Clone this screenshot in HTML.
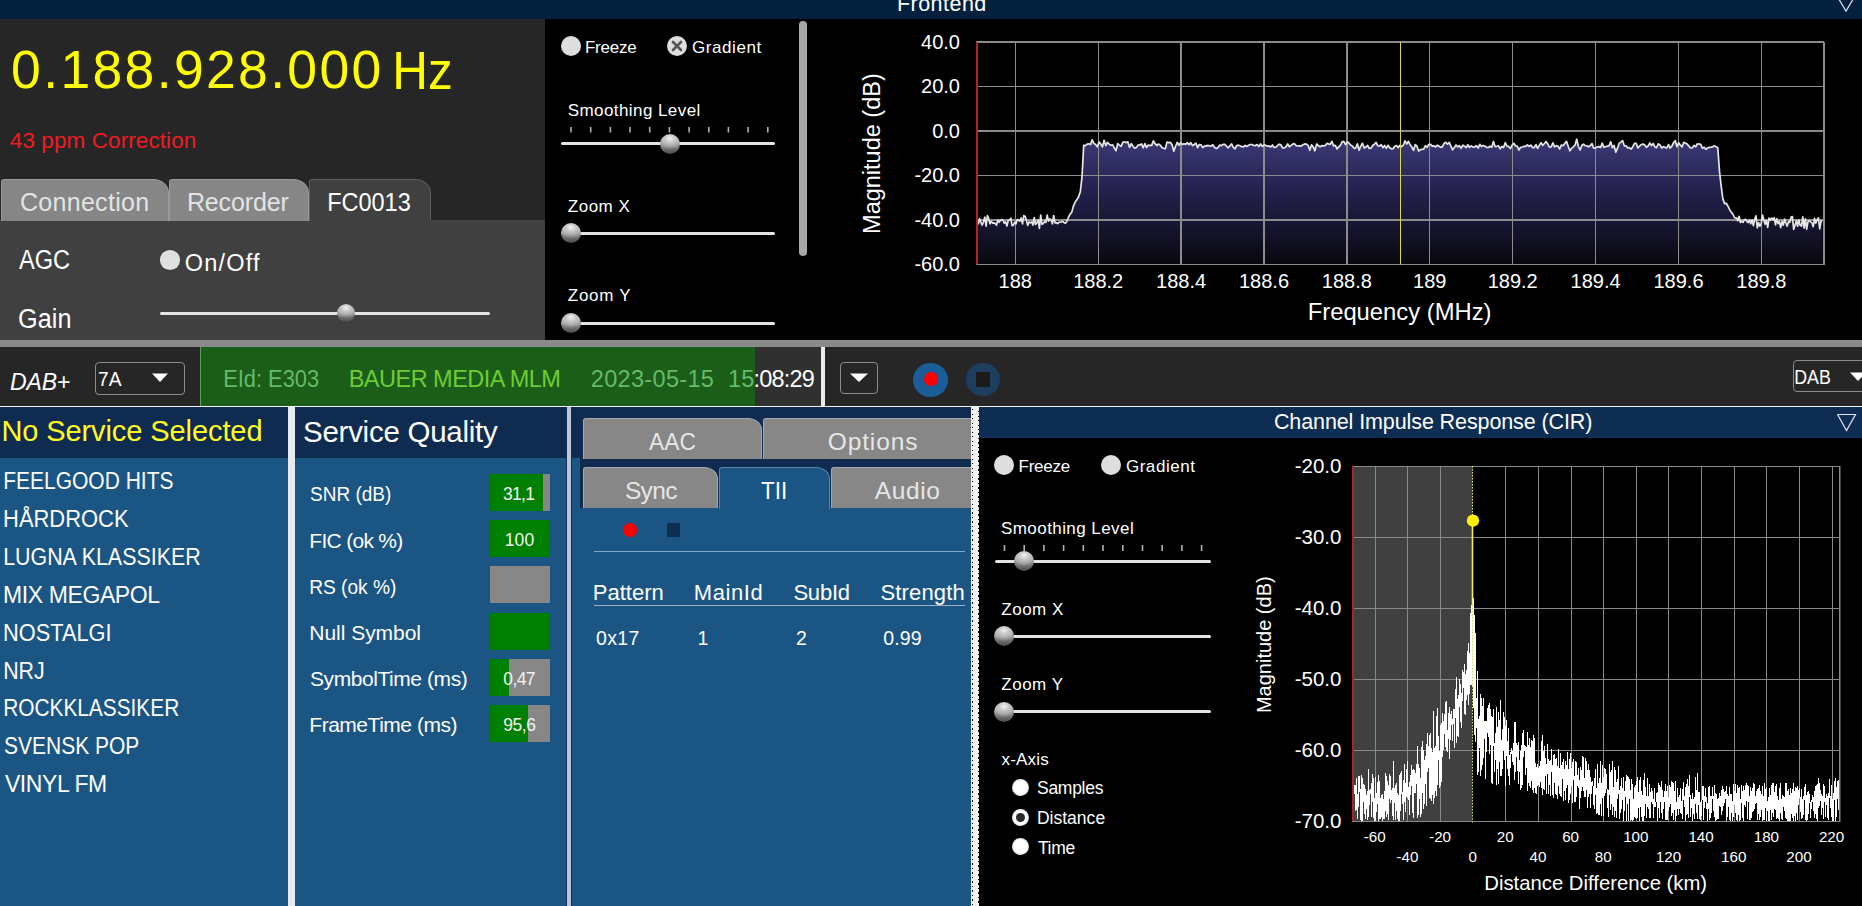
<!DOCTYPE html>
<html><head><meta charset="utf-8"><title>Frontend</title>
<style>
html,body{margin:0;padding:0;}
body{width:1862px;height:906px;overflow:hidden;position:relative;background:#262626;font-family:"Liberation Sans", sans-serif;}
</style></head><body>
<div style="position:absolute;left:0px;top:0px;width:1862px;height:19px;background:#03213f;"></div>
<div style="position:absolute;left:896.9px;top:-5.7px;font-size:21.5px;line-height:21.5px;color:#fff;white-space:pre;letter-spacing:0.48px;">Frontend</div>
<svg style="position:absolute;left:1830px;top:0px" width="32" height="19"><polyline points="7,-4 16,11 25,-4" fill="none" stroke="#dfe6ee" stroke-width="1.2"/></svg>
<div style="position:absolute;left:0px;top:19px;width:545px;height:321px;background:#262626;"></div>
<div style="position:absolute;left:11.1px;top:43.3px;font-size:53.5px;line-height:53.5px;color:#ffff00;white-space:pre;letter-spacing:2.34px;">0.188.928.000</div>
<div style="position:absolute;left:391.6px;top:43.4px;font-size:54px;line-height:54px;color:#ffff00;white-space:pre;transform:scaleX(0.916);transform-origin:4.4px 0;">Hz</div>
<div style="position:absolute;left:9.8px;top:130.0px;font-size:22.5px;line-height:22.5px;color:#ee1c22;white-space:pre;letter-spacing:0.09px;">43 ppm Correction</div>
<div style="position:absolute;left:0px;top:220px;width:545px;height:120px;background:#404040;"></div>
<div style="position:absolute;left:1px;top:179px;width:166px;height:41px;background:#868686;border:1px solid #9b9b9b;border-bottom:none;border-top-left-radius:3px;border-top-right-radius:16px 14px;"></div>
<div style="position:absolute;left:169px;top:179px;width:138px;height:41px;background:#868686;border:1px solid #9b9b9b;border-bottom:none;border-top-left-radius:3px;border-top-right-radius:16px 14px;"></div>
<div style="position:absolute;left:309px;top:179px;width:120px;height:41px;background:#404040;border:1px solid #5e5e5e;border-bottom:none;border-top-left-radius:3px;border-top-right-radius:16px 14px;"></div>
<div style="position:absolute;left:19.9px;top:190.4px;font-size:25px;line-height:25px;color:#e3e3e3;white-space:pre;letter-spacing:0.31px;">Connection</div>
<div style="position:absolute;left:186.9px;top:190.4px;font-size:25px;line-height:25px;color:#e3e3e3;white-space:pre;letter-spacing:-0.14px;">Recorder</div>
<div style="position:absolute;left:326.5px;top:190.1px;font-size:25px;line-height:25px;color:#ffffff;white-space:pre;transform:scaleX(0.940);transform-origin:2.1px 0;">FC0013</div>
<div style="position:absolute;left:19.4px;top:246.7px;font-size:27px;line-height:27px;color:#fff;white-space:pre;transform:scaleX(0.874);transform-origin:0.1px 0;">AGC</div>
<div style="position:absolute;left:18.1px;top:305.7px;font-size:27px;line-height:27px;color:#fff;white-space:pre;transform:scaleX(0.935);transform-origin:1.4px 0;">Gain</div>
<div style="position:absolute;left:160px;top:250px;width:20px;height:19.5px;border-radius:50%;background:#e0e0e0"></div>
<div style="position:absolute;left:184.7px;top:251.6px;font-size:23.5px;line-height:23.5px;color:#fff;white-space:pre;letter-spacing:1.22px;">On/Off</div>
<div style="position:absolute;left:160px;top:311.8px;width:330px;height:3px;border-radius:2px;background:#e4e4e4"></div>
<div style="position:absolute;left:336.8px;top:304.3px;width:18px;height:18px;border-radius:50%;background:radial-gradient(ellipse 70% 55% at 50% 22%, #f2f2f2 0%, #c4c4c4 40%, rgba(150,150,150,0) 100%), linear-gradient(#d8d8d8, #8c8c8c 55%, #4a4a4a)"></div>
<div style="position:absolute;left:545px;top:19px;width:1317px;height:321px;background:#000;"></div>
<div style="position:absolute;left:561px;top:36px;width:20px;height:20px;border-radius:50%;background:#dedede"></div>
<div style="position:absolute;left:585.0px;top:38.8px;font-size:17px;line-height:17px;color:#fff;white-space:pre;letter-spacing:-0.26px;">Freeze</div>
<div style="position:absolute;left:667px;top:36px;width:20px;height:20px;border-radius:50%;background:#dedede"></div>
<svg style="position:absolute;left:667px;top:36px" width="20" height="20"><path d="M6,6 L14,14 M14,6 L6,14" stroke="#555" stroke-width="2.6" stroke-linecap="round"/></svg>
<div style="position:absolute;left:692.1px;top:38.8px;font-size:17px;line-height:17px;color:#fff;white-space:pre;letter-spacing:0.55px;">Gradient</div>
<div style="position:absolute;left:567.7px;top:101.5px;font-size:17px;line-height:17px;color:#fff;white-space:pre;letter-spacing:0.43px;">Smoothing Level</div>
<svg style="position:absolute;left:545px;top:127.4px" width="240" height="6"><rect x="25.2" y="0" width="1.6" height="5.5" fill="#b0b0b0"/><rect x="44.9" y="0" width="1.6" height="5.5" fill="#b0b0b0"/><rect x="64.6" y="0" width="1.6" height="5.5" fill="#b0b0b0"/><rect x="84.2" y="0" width="1.6" height="5.5" fill="#b0b0b0"/><rect x="103.9" y="0" width="1.6" height="5.5" fill="#b0b0b0"/><rect x="123.6" y="0" width="1.6" height="5.5" fill="#b0b0b0"/><rect x="143.3" y="0" width="1.6" height="5.5" fill="#b0b0b0"/><rect x="163.0" y="0" width="1.6" height="5.5" fill="#b0b0b0"/><rect x="182.6" y="0" width="1.6" height="5.5" fill="#b0b0b0"/><rect x="202.3" y="0" width="1.6" height="5.5" fill="#b0b0b0"/><rect x="222.0" y="0" width="1.6" height="5.5" fill="#b0b0b0"/></svg>
<div style="position:absolute;left:561px;top:142.1px;width:214px;height:3px;border-radius:2px;background:#e4e4e4"></div>
<div style="position:absolute;left:659.7px;top:133.6px;width:20px;height:20px;border-radius:50%;background:radial-gradient(ellipse 70% 55% at 50% 22%, #f2f2f2 0%, #c4c4c4 40%, rgba(150,150,150,0) 100%), linear-gradient(#d8d8d8, #8c8c8c 55%, #4a4a4a)"></div>
<div style="position:absolute;left:567.8px;top:197.9px;font-size:17px;line-height:17px;color:#fff;white-space:pre;letter-spacing:0.51px;">Zoom X</div>
<div style="position:absolute;left:561px;top:231.8px;width:214px;height:3px;border-radius:2px;background:#e4e4e4"></div>
<div style="position:absolute;left:561.4px;top:223.3px;width:20px;height:20px;border-radius:50%;background:radial-gradient(ellipse 70% 55% at 50% 22%, #f2f2f2 0%, #c4c4c4 40%, rgba(150,150,150,0) 100%), linear-gradient(#d8d8d8, #8c8c8c 55%, #4a4a4a)"></div>
<div style="position:absolute;left:567.8px;top:287.1px;font-size:17px;line-height:17px;color:#fff;white-space:pre;letter-spacing:0.71px;">Zoom Y</div>
<div style="position:absolute;left:561px;top:321.8px;width:214px;height:3px;border-radius:2px;background:#e4e4e4"></div>
<div style="position:absolute;left:561.4px;top:313.3px;width:20px;height:20px;border-radius:50%;background:radial-gradient(ellipse 70% 55% at 50% 22%, #f2f2f2 0%, #c4c4c4 40%, rgba(150,150,150,0) 100%), linear-gradient(#d8d8d8, #8c8c8c 55%, #4a4a4a)"></div>
<div style="position:absolute;left:799px;top:21px;width:7.5px;height:235px;border-radius:4px;background:#a8a8a8"></div>
<svg style="position:absolute;left:0;top:0" width="1862" height="340" font-family='"Liberation Sans", sans-serif'><defs><linearGradient id="fg" x1="0" y1="0" x2="0" y2="1" gradientUnits="objectBoundingBox"><stop offset="0" stop-color="#3c3976"/><stop offset="0.45" stop-color="#221f4a"/><stop offset="1" stop-color="#08080f"/></linearGradient></defs><polygon points="977,264.5 977.0,221.2 978.3,223.8 979.6,218.7 980.9,222.4 982.2,225.0 983.5,221.8 984.8,217.0 986.1,226.1 987.4,215.7 988.7,218.7 990.0,223.9 991.3,221.3 992.6,223.1 993.9,222.8 995.2,223.4 996.5,225.2 997.8,220.0 999.1,222.3 1000.4,220.6 1001.7,219.6 1003.0,220.3 1004.3,223.2 1005.6,221.8 1006.9,226.0 1008.2,220.5 1009.5,220.0 1010.8,218.2 1012.1,225.6 1013.4,225.2 1014.7,222.1 1016.0,223.8 1017.3,219.6 1018.6,219.8 1019.9,221.1 1021.2,217.9 1022.5,223.9 1023.8,215.7 1025.1,216.3 1026.4,220.4 1027.7,225.4 1029.0,221.8 1030.3,222.8 1031.6,221.8 1032.9,225.0 1034.2,217.5 1035.5,224.5 1036.8,222.8 1038.1,219.9 1039.4,228.3 1040.7,215.1 1042.0,224.3 1043.3,223.5 1044.6,221.5 1045.9,222.4 1047.2,215.1 1048.5,221.1 1049.8,218.9 1051.1,219.9 1052.4,223.8 1053.7,215.5 1055.0,222.8 1056.3,222.6 1057.6,223.7 1058.9,222.3 1060.2,222.0 1061.5,222.0 1062.8,221.5 1064.1,222.7 1065.4,223.2 1066.7,221.7 1068.4,217.5 1070.1,214.2 1071.8,212.1 1073.5,205.8 1075.2,202.1 1076.9,199.6 1078.6,196.8 1080.3,191.7 1082.0,176.8 1083.7,145.4 1085.4,145.6 1087.1,144.1 1088.8,143.8 1090.5,144.6 1092.2,139.8 1093.9,143.3 1095.6,144.6 1097.3,146.8 1099.0,142.1 1100.7,143.9 1102.4,146.9 1104.1,140.2 1105.8,145.6 1107.5,142.3 1109.2,144.3 1110.9,145.3 1112.6,144.9 1114.3,147.9 1116.0,150.7 1117.7,143.7 1119.4,145.1 1121.1,146.4 1122.8,142.4 1124.5,141.8 1126.2,142.6 1127.9,141.9 1129.6,147.4 1131.3,143.6 1133.0,146.3 1134.7,148.3 1136.4,147.4 1138.1,145.1 1139.8,144.9 1141.5,143.9 1143.2,147.8 1144.9,143.6 1146.6,147.6 1148.3,145.1 1150.0,145.3 1151.7,145.4 1153.4,140.8 1155.1,143.7 1156.8,145.5 1158.5,144.0 1160.2,145.1 1161.9,147.6 1163.6,148.3 1165.3,148.7 1167.0,142.1 1168.7,142.6 1170.4,142.4 1172.1,144.7 1173.8,151.2 1175.5,146.5 1177.2,142.3 1178.9,145.2 1180.6,142.8 1182.3,144.5 1184.0,143.7 1185.7,144.4 1187.4,142.6 1189.1,144.7 1190.8,142.6 1192.5,145.7 1194.2,144.5 1195.9,143.1 1197.6,147.6 1199.3,144.5 1201.0,144.9 1202.7,147.6 1204.4,146.2 1206.1,146.1 1207.8,145.4 1209.5,146.0 1211.2,146.2 1212.9,144.7 1214.6,147.6 1216.3,148.6 1218.0,147.6 1219.7,145.0 1221.4,145.7 1223.1,144.3 1224.8,144.4 1226.5,146.2 1228.2,147.8 1229.9,145.9 1231.6,144.0 1233.3,147.4 1235.0,148.9 1236.7,145.5 1238.4,145.2 1240.1,145.8 1241.8,146.7 1243.5,146.9 1245.2,145.4 1246.9,146.4 1248.6,145.2 1250.3,144.5 1252.0,144.5 1253.7,145.5 1255.4,145.6 1257.1,144.6 1258.8,146.5 1260.5,143.9 1262.2,146.4 1263.9,144.8 1265.6,145.3 1267.3,146.2 1269.0,145.9 1270.7,147.0 1272.4,145.0 1274.1,147.4 1275.8,147.1 1277.5,145.7 1279.2,144.2 1280.9,144.8 1282.6,148.0 1284.3,147.9 1286.0,146.7 1287.7,143.9 1289.4,146.8 1291.1,145.4 1292.8,144.1 1294.5,143.7 1296.2,145.6 1297.9,145.9 1299.6,145.8 1301.3,146.1 1303.0,144.7 1304.7,143.9 1306.4,144.1 1308.1,145.4 1309.8,150.3 1311.5,144.9 1313.2,146.9 1314.9,150.8 1316.6,144.0 1318.3,145.5 1320.0,146.9 1321.7,145.6 1323.4,145.8 1325.1,145.6 1326.8,143.4 1328.5,143.9 1330.2,144.3 1331.9,141.4 1333.6,145.9 1335.3,145.4 1337.0,148.9 1338.7,146.9 1340.4,145.3 1342.1,141.9 1343.8,141.3 1345.5,144.7 1347.2,141.8 1348.9,142.9 1350.6,145.1 1352.3,145.9 1354.0,148.3 1355.7,148.1 1357.4,143.8 1359.1,150.3 1360.8,146.1 1362.5,143.3 1364.2,148.0 1365.9,147.1 1367.6,145.4 1369.3,148.5 1371.0,148.1 1372.7,145.5 1374.4,144.2 1376.1,142.3 1377.8,145.9 1379.5,146.0 1381.2,144.7 1382.9,147.7 1384.6,145.5 1386.3,148.3 1388.0,145.3 1389.7,147.7 1391.4,148.8 1393.1,148.7 1394.8,146.3 1396.5,145.5 1398.2,147.5 1399.9,145.4 1401.6,146.7 1403.3,145.2 1405.0,140.8 1406.7,144.1 1408.4,141.3 1410.1,144.7 1411.8,147.1 1413.5,150.4 1415.2,144.7 1416.9,145.9 1418.6,151.1 1420.3,149.7 1422.0,149.3 1423.7,149.1 1425.4,145.6 1427.1,147.3 1428.8,144.3 1430.5,144.4 1432.2,146.2 1433.9,145.9 1435.6,146.9 1437.3,145.2 1439.0,146.2 1440.7,147.4 1442.4,146.9 1444.1,143.3 1445.8,142.3 1447.5,144.2 1449.2,142.3 1450.9,146.1 1452.6,149.8 1454.3,147.5 1456.0,145.0 1457.7,146.8 1459.4,145.6 1461.1,148.4 1462.8,145.1 1464.5,146.2 1466.2,147.6 1467.9,144.7 1469.6,147.5 1471.3,145.9 1473.0,147.1 1474.7,146.8 1476.4,145.7 1478.1,148.1 1479.8,144.3 1481.5,146.5 1483.2,145.4 1484.9,146.2 1486.6,147.3 1488.3,147.5 1490.0,146.2 1491.7,147.2 1493.4,141.4 1495.1,146.6 1496.8,146.3 1498.5,145.8 1500.2,148.8 1501.9,146.5 1503.6,147.5 1505.3,142.6 1507.0,146.1 1508.7,146.4 1510.4,148.6 1512.1,145.0 1513.8,143.3 1515.5,146.0 1517.2,146.2 1518.9,150.0 1520.6,147.3 1522.3,147.0 1524.0,146.4 1525.7,146.3 1527.4,144.8 1529.1,146.4 1530.8,145.1 1532.5,147.6 1534.2,147.6 1535.9,144.6 1537.6,148.4 1539.3,145.4 1541.0,142.8 1542.7,145.3 1544.4,143.5 1546.1,141.6 1547.8,144.1 1549.5,147.2 1551.2,146.9 1552.9,142.9 1554.6,146.9 1556.3,145.6 1558.0,146.3 1559.7,149.0 1561.4,145.0 1563.1,145.7 1564.8,143.4 1566.5,141.4 1568.2,146.3 1569.9,150.8 1571.6,148.3 1573.3,146.9 1575.0,145.2 1576.7,139.2 1578.4,146.5 1580.1,150.0 1581.8,145.5 1583.5,144.2 1585.2,145.6 1586.9,145.9 1588.6,146.8 1590.3,145.7 1592.0,143.6 1593.7,148.2 1595.4,148.2 1597.1,146.8 1598.8,146.6 1600.5,147.6 1602.2,143.2 1603.9,147.3 1605.6,146.7 1607.3,146.1 1609.0,145.8 1610.7,141.8 1612.4,147.8 1614.1,145.4 1615.8,152.2 1617.5,148.2 1619.2,143.2 1620.9,142.1 1622.6,140.6 1624.3,145.8 1626.0,145.8 1627.7,147.9 1629.4,147.6 1631.1,149.2 1632.8,146.7 1634.5,143.4 1636.2,143.4 1637.9,148.0 1639.6,146.2 1641.3,144.5 1643.0,144.1 1644.7,145.1 1646.4,147.3 1648.1,146.0 1649.8,142.9 1651.5,145.5 1653.2,143.5 1654.9,146.9 1656.6,147.7 1658.3,143.9 1660.0,144.9 1661.7,148.1 1663.4,146.7 1665.1,147.4 1666.8,148.0 1668.5,144.6 1670.2,148.0 1671.9,146.1 1673.6,142.6 1675.3,140.7 1677.0,146.7 1678.7,142.7 1680.4,145.2 1682.1,146.8 1683.8,142.3 1685.5,143.2 1687.2,144.1 1688.9,146.1 1690.6,148.0 1692.3,147.8 1694.0,145.5 1695.7,146.7 1697.4,143.8 1699.1,144.0 1700.8,144.4 1702.5,148.3 1704.2,147.3 1705.9,149.4 1707.6,148.0 1709.3,147.4 1711.0,147.2 1712.7,146.8 1714.4,145.8 1716.1,146.7 1717.8,147.7 1719.5,171.4 1721.2,186.3 1722.9,198.9 1724.6,203.6 1726.3,203.3 1728.0,206.2 1729.7,209.7 1731.4,212.4 1733.1,214.5 1734.8,218.0 1736.5,217.9 1737.8,220.7 1739.1,216.4 1740.4,222.5 1741.7,221.1 1743.0,222.3 1744.3,219.8 1745.6,219.4 1746.9,221.5 1748.2,222.5 1749.5,219.9 1750.8,223.8 1752.1,219.8 1753.4,225.6 1754.7,219.2 1756.0,215.8 1757.3,227.9 1758.6,222.6 1759.9,226.2 1761.2,223.6 1762.5,215.0 1763.8,219.7 1765.1,224.3 1766.4,220.5 1767.7,227.4 1769.0,218.2 1770.3,220.0 1771.6,218.1 1772.9,219.7 1774.2,217.7 1775.5,224.8 1776.8,218.6 1778.1,223.6 1779.4,221.4 1780.7,227.6 1782.0,221.4 1783.3,225.2 1784.6,219.0 1785.9,223.0 1787.2,226.1 1788.5,221.5 1789.8,222.4 1791.1,217.1 1792.4,216.6 1793.7,229.3 1795.0,225.2 1796.3,220.5 1797.6,226.2 1798.9,219.9 1800.2,225.5 1801.5,226.1 1802.8,216.9 1804.1,228.1 1805.4,218.8 1806.7,229.2 1808.0,221.7 1809.3,220.7 1810.6,221.8 1811.9,222.8 1813.2,226.6 1814.5,218.4 1815.8,223.3 1817.1,219.7 1818.4,217.9 1819.7,228.8 1821.0,221.2 1822.3,221.1 1823,264.5" fill="url(#fg)"/><g stroke="#8c8c8c" stroke-width="1.3" shape-rendering="crispEdges"><line x1="976" y1="42.0" x2="1824" y2="42.0"/><line x1="976" y1="86.5" x2="1824" y2="86.5"/><line x1="976" y1="131.0" x2="1824" y2="131.0"/><line x1="976" y1="175.5" x2="1824" y2="175.5"/><line x1="976" y1="220.0" x2="1824" y2="220.0"/><line x1="976" y1="264.5" x2="1824" y2="264.5"/><line x1="1015.3" y1="42" x2="1015.3" y2="264.5"/><line x1="1098.2" y1="42" x2="1098.2" y2="264.5"/><line x1="1181.1" y1="42" x2="1181.1" y2="264.5"/><line x1="1264.0" y1="42" x2="1264.0" y2="264.5"/><line x1="1346.9" y1="42" x2="1346.9" y2="264.5"/><line x1="1429.8" y1="42" x2="1429.8" y2="264.5"/><line x1="1512.7" y1="42" x2="1512.7" y2="264.5"/><line x1="1595.6" y1="42" x2="1595.6" y2="264.5"/><line x1="1678.5" y1="42" x2="1678.5" y2="264.5"/><line x1="1761.4" y1="42" x2="1761.4" y2="264.5"/><line x1="1824" y1="42" x2="1824" y2="264.5"/></g><polyline points="977.0,221.2 978.3,223.8 979.6,218.7 980.9,222.4 982.2,225.0 983.5,221.8 984.8,217.0 986.1,226.1 987.4,215.7 988.7,218.7 990.0,223.9 991.3,221.3 992.6,223.1 993.9,222.8 995.2,223.4 996.5,225.2 997.8,220.0 999.1,222.3 1000.4,220.6 1001.7,219.6 1003.0,220.3 1004.3,223.2 1005.6,221.8 1006.9,226.0 1008.2,220.5 1009.5,220.0 1010.8,218.2 1012.1,225.6 1013.4,225.2 1014.7,222.1 1016.0,223.8 1017.3,219.6 1018.6,219.8 1019.9,221.1 1021.2,217.9 1022.5,223.9 1023.8,215.7 1025.1,216.3 1026.4,220.4 1027.7,225.4 1029.0,221.8 1030.3,222.8 1031.6,221.8 1032.9,225.0 1034.2,217.5 1035.5,224.5 1036.8,222.8 1038.1,219.9 1039.4,228.3 1040.7,215.1 1042.0,224.3 1043.3,223.5 1044.6,221.5 1045.9,222.4 1047.2,215.1 1048.5,221.1 1049.8,218.9 1051.1,219.9 1052.4,223.8 1053.7,215.5 1055.0,222.8 1056.3,222.6 1057.6,223.7 1058.9,222.3 1060.2,222.0 1061.5,222.0 1062.8,221.5 1064.1,222.7 1065.4,223.2 1066.7,221.7 1068.4,217.5 1070.1,214.2 1071.8,212.1 1073.5,205.8 1075.2,202.1 1076.9,199.6 1078.6,196.8 1080.3,191.7 1082.0,176.8 1083.7,145.4 1085.4,145.6 1087.1,144.1 1088.8,143.8 1090.5,144.6 1092.2,139.8 1093.9,143.3 1095.6,144.6 1097.3,146.8 1099.0,142.1 1100.7,143.9 1102.4,146.9 1104.1,140.2 1105.8,145.6 1107.5,142.3 1109.2,144.3 1110.9,145.3 1112.6,144.9 1114.3,147.9 1116.0,150.7 1117.7,143.7 1119.4,145.1 1121.1,146.4 1122.8,142.4 1124.5,141.8 1126.2,142.6 1127.9,141.9 1129.6,147.4 1131.3,143.6 1133.0,146.3 1134.7,148.3 1136.4,147.4 1138.1,145.1 1139.8,144.9 1141.5,143.9 1143.2,147.8 1144.9,143.6 1146.6,147.6 1148.3,145.1 1150.0,145.3 1151.7,145.4 1153.4,140.8 1155.1,143.7 1156.8,145.5 1158.5,144.0 1160.2,145.1 1161.9,147.6 1163.6,148.3 1165.3,148.7 1167.0,142.1 1168.7,142.6 1170.4,142.4 1172.1,144.7 1173.8,151.2 1175.5,146.5 1177.2,142.3 1178.9,145.2 1180.6,142.8 1182.3,144.5 1184.0,143.7 1185.7,144.4 1187.4,142.6 1189.1,144.7 1190.8,142.6 1192.5,145.7 1194.2,144.5 1195.9,143.1 1197.6,147.6 1199.3,144.5 1201.0,144.9 1202.7,147.6 1204.4,146.2 1206.1,146.1 1207.8,145.4 1209.5,146.0 1211.2,146.2 1212.9,144.7 1214.6,147.6 1216.3,148.6 1218.0,147.6 1219.7,145.0 1221.4,145.7 1223.1,144.3 1224.8,144.4 1226.5,146.2 1228.2,147.8 1229.9,145.9 1231.6,144.0 1233.3,147.4 1235.0,148.9 1236.7,145.5 1238.4,145.2 1240.1,145.8 1241.8,146.7 1243.5,146.9 1245.2,145.4 1246.9,146.4 1248.6,145.2 1250.3,144.5 1252.0,144.5 1253.7,145.5 1255.4,145.6 1257.1,144.6 1258.8,146.5 1260.5,143.9 1262.2,146.4 1263.9,144.8 1265.6,145.3 1267.3,146.2 1269.0,145.9 1270.7,147.0 1272.4,145.0 1274.1,147.4 1275.8,147.1 1277.5,145.7 1279.2,144.2 1280.9,144.8 1282.6,148.0 1284.3,147.9 1286.0,146.7 1287.7,143.9 1289.4,146.8 1291.1,145.4 1292.8,144.1 1294.5,143.7 1296.2,145.6 1297.9,145.9 1299.6,145.8 1301.3,146.1 1303.0,144.7 1304.7,143.9 1306.4,144.1 1308.1,145.4 1309.8,150.3 1311.5,144.9 1313.2,146.9 1314.9,150.8 1316.6,144.0 1318.3,145.5 1320.0,146.9 1321.7,145.6 1323.4,145.8 1325.1,145.6 1326.8,143.4 1328.5,143.9 1330.2,144.3 1331.9,141.4 1333.6,145.9 1335.3,145.4 1337.0,148.9 1338.7,146.9 1340.4,145.3 1342.1,141.9 1343.8,141.3 1345.5,144.7 1347.2,141.8 1348.9,142.9 1350.6,145.1 1352.3,145.9 1354.0,148.3 1355.7,148.1 1357.4,143.8 1359.1,150.3 1360.8,146.1 1362.5,143.3 1364.2,148.0 1365.9,147.1 1367.6,145.4 1369.3,148.5 1371.0,148.1 1372.7,145.5 1374.4,144.2 1376.1,142.3 1377.8,145.9 1379.5,146.0 1381.2,144.7 1382.9,147.7 1384.6,145.5 1386.3,148.3 1388.0,145.3 1389.7,147.7 1391.4,148.8 1393.1,148.7 1394.8,146.3 1396.5,145.5 1398.2,147.5 1399.9,145.4 1401.6,146.7 1403.3,145.2 1405.0,140.8 1406.7,144.1 1408.4,141.3 1410.1,144.7 1411.8,147.1 1413.5,150.4 1415.2,144.7 1416.9,145.9 1418.6,151.1 1420.3,149.7 1422.0,149.3 1423.7,149.1 1425.4,145.6 1427.1,147.3 1428.8,144.3 1430.5,144.4 1432.2,146.2 1433.9,145.9 1435.6,146.9 1437.3,145.2 1439.0,146.2 1440.7,147.4 1442.4,146.9 1444.1,143.3 1445.8,142.3 1447.5,144.2 1449.2,142.3 1450.9,146.1 1452.6,149.8 1454.3,147.5 1456.0,145.0 1457.7,146.8 1459.4,145.6 1461.1,148.4 1462.8,145.1 1464.5,146.2 1466.2,147.6 1467.9,144.7 1469.6,147.5 1471.3,145.9 1473.0,147.1 1474.7,146.8 1476.4,145.7 1478.1,148.1 1479.8,144.3 1481.5,146.5 1483.2,145.4 1484.9,146.2 1486.6,147.3 1488.3,147.5 1490.0,146.2 1491.7,147.2 1493.4,141.4 1495.1,146.6 1496.8,146.3 1498.5,145.8 1500.2,148.8 1501.9,146.5 1503.6,147.5 1505.3,142.6 1507.0,146.1 1508.7,146.4 1510.4,148.6 1512.1,145.0 1513.8,143.3 1515.5,146.0 1517.2,146.2 1518.9,150.0 1520.6,147.3 1522.3,147.0 1524.0,146.4 1525.7,146.3 1527.4,144.8 1529.1,146.4 1530.8,145.1 1532.5,147.6 1534.2,147.6 1535.9,144.6 1537.6,148.4 1539.3,145.4 1541.0,142.8 1542.7,145.3 1544.4,143.5 1546.1,141.6 1547.8,144.1 1549.5,147.2 1551.2,146.9 1552.9,142.9 1554.6,146.9 1556.3,145.6 1558.0,146.3 1559.7,149.0 1561.4,145.0 1563.1,145.7 1564.8,143.4 1566.5,141.4 1568.2,146.3 1569.9,150.8 1571.6,148.3 1573.3,146.9 1575.0,145.2 1576.7,139.2 1578.4,146.5 1580.1,150.0 1581.8,145.5 1583.5,144.2 1585.2,145.6 1586.9,145.9 1588.6,146.8 1590.3,145.7 1592.0,143.6 1593.7,148.2 1595.4,148.2 1597.1,146.8 1598.8,146.6 1600.5,147.6 1602.2,143.2 1603.9,147.3 1605.6,146.7 1607.3,146.1 1609.0,145.8 1610.7,141.8 1612.4,147.8 1614.1,145.4 1615.8,152.2 1617.5,148.2 1619.2,143.2 1620.9,142.1 1622.6,140.6 1624.3,145.8 1626.0,145.8 1627.7,147.9 1629.4,147.6 1631.1,149.2 1632.8,146.7 1634.5,143.4 1636.2,143.4 1637.9,148.0 1639.6,146.2 1641.3,144.5 1643.0,144.1 1644.7,145.1 1646.4,147.3 1648.1,146.0 1649.8,142.9 1651.5,145.5 1653.2,143.5 1654.9,146.9 1656.6,147.7 1658.3,143.9 1660.0,144.9 1661.7,148.1 1663.4,146.7 1665.1,147.4 1666.8,148.0 1668.5,144.6 1670.2,148.0 1671.9,146.1 1673.6,142.6 1675.3,140.7 1677.0,146.7 1678.7,142.7 1680.4,145.2 1682.1,146.8 1683.8,142.3 1685.5,143.2 1687.2,144.1 1688.9,146.1 1690.6,148.0 1692.3,147.8 1694.0,145.5 1695.7,146.7 1697.4,143.8 1699.1,144.0 1700.8,144.4 1702.5,148.3 1704.2,147.3 1705.9,149.4 1707.6,148.0 1709.3,147.4 1711.0,147.2 1712.7,146.8 1714.4,145.8 1716.1,146.7 1717.8,147.7 1719.5,171.4 1721.2,186.3 1722.9,198.9 1724.6,203.6 1726.3,203.3 1728.0,206.2 1729.7,209.7 1731.4,212.4 1733.1,214.5 1734.8,218.0 1736.5,217.9 1737.8,220.7 1739.1,216.4 1740.4,222.5 1741.7,221.1 1743.0,222.3 1744.3,219.8 1745.6,219.4 1746.9,221.5 1748.2,222.5 1749.5,219.9 1750.8,223.8 1752.1,219.8 1753.4,225.6 1754.7,219.2 1756.0,215.8 1757.3,227.9 1758.6,222.6 1759.9,226.2 1761.2,223.6 1762.5,215.0 1763.8,219.7 1765.1,224.3 1766.4,220.5 1767.7,227.4 1769.0,218.2 1770.3,220.0 1771.6,218.1 1772.9,219.7 1774.2,217.7 1775.5,224.8 1776.8,218.6 1778.1,223.6 1779.4,221.4 1780.7,227.6 1782.0,221.4 1783.3,225.2 1784.6,219.0 1785.9,223.0 1787.2,226.1 1788.5,221.5 1789.8,222.4 1791.1,217.1 1792.4,216.6 1793.7,229.3 1795.0,225.2 1796.3,220.5 1797.6,226.2 1798.9,219.9 1800.2,225.5 1801.5,226.1 1802.8,216.9 1804.1,228.1 1805.4,218.8 1806.7,229.2 1808.0,221.7 1809.3,220.7 1810.6,221.8 1811.9,222.8 1813.2,226.6 1814.5,218.4 1815.8,223.3 1817.1,219.7 1818.4,217.9 1819.7,228.8 1821.0,221.2 1822.3,221.1" fill="none" stroke="#e6e6e6" stroke-width="1.7" stroke-linejoin="round"/><rect x="976" y="42" width="2" height="222.5" fill="#b02424"/><line x1="1400.5" y1="42" x2="1400.5" y2="264.5" stroke="#d8d84a" stroke-width="1"/><g font-size="20" fill="#fff"><text x="960" y="48.9" text-anchor="end">40.0</text><text x="960" y="93.4" text-anchor="end">20.0</text><text x="960" y="137.9" text-anchor="end">0.0</text><text x="960" y="182.4" text-anchor="end">-20.0</text><text x="960" y="226.9" text-anchor="end">-40.0</text><text x="960" y="271.4" text-anchor="end">-60.0</text><text x="1015.3" y="288.2" text-anchor="middle">188</text><text x="1098.2" y="288.2" text-anchor="middle">188.2</text><text x="1181.1" y="288.2" text-anchor="middle">188.4</text><text x="1264.0" y="288.2" text-anchor="middle">188.6</text><text x="1346.9" y="288.2" text-anchor="middle">188.8</text><text x="1429.8" y="288.2" text-anchor="middle">189</text><text x="1512.7" y="288.2" text-anchor="middle">189.2</text><text x="1595.6" y="288.2" text-anchor="middle">189.4</text><text x="1678.5" y="288.2" text-anchor="middle">189.6</text><text x="1761.4" y="288.2" text-anchor="middle">189.8</text></g><text x="1399.6" y="320.3" text-anchor="middle" font-size="23.8" fill="#fff">Frequency (MHz)</text><text x="880.5" y="153.6" text-anchor="middle" font-size="23.5" fill="#fff" transform="rotate(-90 880.5 153.6)">Magnitude (dB)</text></svg>
<div style="position:absolute;left:0px;top:340px;width:1862px;height:7px;background:#8a8a8a;"></div>
<div style="position:absolute;left:0px;top:347px;width:1862px;height:59px;background:#262626;"></div>
<div style="position:absolute;left:0px;top:406px;width:1862px;height:1px;background:#f0f0f0;"></div>
<div style="position:absolute;left:10.0px;top:371.4px;font-size:23px;line-height:23px;color:#fff;white-space:pre;letter-spacing:-0.16px;font-style:italic;">DAB+</div>
<div style="position:absolute;left:95px;top:362px;width:88px;height:31px;border:1px solid #8c8c8c;border-radius:4px;background:#262626"></div>
<div style="position:absolute;left:97.7px;top:369.3px;font-size:20px;line-height:20px;color:#fff;white-space:pre;transform:scaleX(0.959);transform-origin:1.0px 0;">7A</div>
<svg style="position:absolute;left:150px;top:372px" width="20" height="12"><polygon points="2,1.5 18,1.5 10,10" fill="#fff"/></svg>
<div style="position:absolute;left:200px;top:347px;width:554.5px;height:59px;background:#1a5e1a;"></div>
<div style="position:absolute;left:200px;top:347px;width:1px;height:59px;background:#5f9a5f;"></div>
<div style="position:absolute;left:754.5px;top:347px;width:66.5px;height:59px;background:#303030;"></div>
<div style="position:absolute;left:821px;top:347px;width:4px;height:59px;background:#ececec;"></div>
<div style="position:absolute;left:223.1px;top:367.8px;font-size:23.5px;line-height:23.5px;color:#66bb66;white-space:pre;transform:scaleX(0.930);transform-origin:1.9px 0;">EId: E303</div>
<div style="position:absolute;left:348.7px;top:367.8px;font-size:23.5px;line-height:23.5px;color:#6fcc33;white-space:pre;letter-spacing:-0.51px;">BAUER MEDIA MLM</div>
<div style="position:absolute;left:590.8px;top:367.8px;font-size:23.5px;line-height:23.5px;color:#66bb66;white-space:pre;letter-spacing:0.32px;">2023-05-15  15</div>
<div style="position:absolute;left:753.4px;top:367.8px;font-size:23.5px;line-height:23.5px;color:#ffffff;white-space:pre;letter-spacing:-0.77px;">:08:29</div>
<div style="position:absolute;left:840px;top:362px;width:36px;height:30px;border:1px solid #8c8c8c;border-radius:4px;background:#262626"></div>
<svg style="position:absolute;left:848px;top:372px" width="22" height="12"><polygon points="2,1.5 20,1.5 11,10" fill="#fff"/></svg>
<div style="position:absolute;left:913.3px;top:362.6px;width:34.4px;height:34.4px;border-radius:50%;background:#1b5d98"></div>
<div style="position:absolute;left:923.5px;top:372.1px;width:14.2px;height:14.2px;border-radius:50%;background:#ff0000"></div>
<div style="position:absolute;left:966.2px;top:362.5px;width:33.8px;height:33.8px;border-radius:50%;background:#1e3e5f"></div>
<div style="position:absolute;left:976.2px;top:372.2px;width:13.5px;height:14.6px;background:#1a1a1a;"></div>
<div style="position:absolute;left:1792.5px;top:360.4px;width:80px;height:30px;border:1px solid #8c8c8c;border-radius:4px;background:#262626"></div>
<div style="position:absolute;left:1793.9px;top:367.3px;font-size:20px;line-height:20px;color:#fff;white-space:pre;transform:scaleX(0.889);transform-origin:1.6px 0;">DAB</div>
<svg style="position:absolute;left:1848px;top:371px" width="20" height="12"><polygon points="2,1.5 18,1.5 10,10" fill="#fff"/></svg>
<div style="position:absolute;left:0px;top:407px;width:288px;height:51px;background:#0f2c50;"></div>
<div style="position:absolute;left:0px;top:458px;width:288px;height:448px;background:#1b5584;"></div>
<div style="position:absolute;left:288px;top:407px;width:7px;height:499px;background:#e8eaf0;"></div>
<div style="position:absolute;left:1.4px;top:417.1px;font-size:29px;line-height:29px;color:#ffff22;white-space:pre;letter-spacing:-0.09px;">No Service Selected</div>
<div style="position:absolute;left:3.1px;top:470.0px;font-size:23px;line-height:23px;color:#fff;white-space:pre;transform:scaleX(0.913);transform-origin:1.9px 0;">FEELGOOD HITS</div>
<div style="position:absolute;left:3.1px;top:507.9px;font-size:23px;line-height:23px;color:#fff;white-space:pre;transform:scaleX(0.953);transform-origin:1.9px 0;">HÅRDROCK</div>
<div style="position:absolute;left:3.1px;top:545.8px;font-size:23px;line-height:23px;color:#fff;white-space:pre;transform:scaleX(0.931);transform-origin:1.9px 0;">LUGNA KLASSIKER</div>
<div style="position:absolute;left:3.1px;top:583.7px;font-size:23px;line-height:23px;color:#fff;white-space:pre;letter-spacing:-0.41px;">MIX MEGAPOL</div>
<div style="position:absolute;left:3.1px;top:621.6px;font-size:23px;line-height:23px;color:#fff;white-space:pre;transform:scaleX(0.946);transform-origin:1.9px 0;">NOSTALGI</div>
<div style="position:absolute;left:3.1px;top:659.5px;font-size:23px;line-height:23px;color:#fff;white-space:pre;transform:scaleX(0.928);transform-origin:1.9px 0;">NRJ</div>
<div style="position:absolute;left:3.1px;top:697.4px;font-size:23px;line-height:23px;color:#fff;white-space:pre;transform:scaleX(0.906);transform-origin:1.9px 0;">ROCKKLASSIKER</div>
<div style="position:absolute;left:4.0px;top:735.3px;font-size:23px;line-height:23px;color:#fff;white-space:pre;transform:scaleX(0.912);transform-origin:1.0px 0;">SVENSK POP</div>
<div style="position:absolute;left:4.9px;top:773.2px;font-size:23px;line-height:23px;color:#fff;white-space:pre;letter-spacing:-0.41px;">VINYL FM</div>
<div style="position:absolute;left:295px;top:407px;width:272px;height:51px;background:#0f2c50;"></div>
<div style="position:absolute;left:295px;top:458px;width:272px;height:448px;background:#1b5584;"></div>
<div style="position:absolute;left:566px;top:407px;width:1px;height:499px;background:#12305a;"></div>
<div style="position:absolute;left:567px;top:407px;width:4px;height:499px;background:#bcc6d6;"></div>
<div style="position:absolute;left:303.0px;top:417.1px;font-size:29.5px;line-height:29.5px;color:#fff;white-space:pre;letter-spacing:-0.26px;">Service Quality</div>
<div style="position:absolute;left:310.0px;top:483.4px;font-size:21px;line-height:21px;color:#fff;white-space:pre;transform:scaleX(0.903);transform-origin:1.0px 0;">SNR (dB)</div>
<div style="position:absolute;left:490px;top:474.2px;width:60px;height:37px;background:#878787;"></div>
<div style="position:absolute;left:490px;top:474.2px;width:53px;height:37px;background:#008000;"></div>
<div style="position:absolute;left:502.9px;top:486.3px;font-size:17.5px;line-height:17.5px;color:#f4f4f4;white-space:pre;letter-spacing:-0.68px;">31,1</div>
<div style="position:absolute;left:309.3px;top:529.5px;font-size:21px;line-height:21px;color:#fff;white-space:pre;letter-spacing:-0.70px;">FIC (ok %)</div>
<div style="position:absolute;left:490px;top:520.3px;width:60px;height:37px;background:#878787;"></div>
<div style="position:absolute;left:490px;top:520.3px;width:60px;height:37px;background:#008000;"></div>
<div style="position:absolute;left:504.7px;top:532.4px;font-size:17.5px;line-height:17.5px;color:#f4f4f4;white-space:pre;letter-spacing:0.17px;">100</div>
<div style="position:absolute;left:309.3px;top:575.6px;font-size:21px;line-height:21px;color:#fff;white-space:pre;transform:scaleX(0.912);transform-origin:1.7px 0;">RS (ok %)</div>
<div style="position:absolute;left:490px;top:566.4px;width:60px;height:37px;background:#878787;"></div>
<div style="position:absolute;left:309.3px;top:621.7px;font-size:21px;line-height:21px;color:#fff;white-space:pre;letter-spacing:-0.03px;">Null Symbol</div>
<div style="position:absolute;left:490px;top:612.5px;width:60px;height:37px;background:#878787;"></div>
<div style="position:absolute;left:490px;top:612.5px;width:60px;height:37px;background:#008000;"></div>
<div style="position:absolute;left:310.0px;top:667.8px;font-size:21px;line-height:21px;color:#fff;white-space:pre;letter-spacing:-0.43px;">SymbolTime (ms)</div>
<div style="position:absolute;left:490px;top:658.6px;width:60px;height:37px;background:#878787;"></div>
<div style="position:absolute;left:490px;top:658.6px;width:19px;height:37px;background:#008000;"></div>
<div style="position:absolute;left:503.3px;top:670.7px;font-size:17.5px;line-height:17.5px;color:#f4f4f4;white-space:pre;letter-spacing:-0.61px;">0,47</div>
<div style="position:absolute;left:309.3px;top:713.9px;font-size:21px;line-height:21px;color:#fff;white-space:pre;letter-spacing:-0.48px;">FrameTime (ms)</div>
<div style="position:absolute;left:490px;top:704.7px;width:60px;height:37px;background:#878787;"></div>
<div style="position:absolute;left:490px;top:704.7px;width:38px;height:37px;background:#008000;"></div>
<div style="position:absolute;left:503.2px;top:716.8px;font-size:17.5px;line-height:17.5px;color:#f4f4f4;white-space:pre;letter-spacing:-0.39px;">95,6</div>
<div style="position:absolute;left:571px;top:407px;width:400px;height:499px;background:#1b5584;"></div>
<div style="position:absolute;left:571px;top:407px;width:400px;height:51px;background:#0f2c50;"></div>
<div style="position:absolute;left:580px;top:458px;width:391px;height:50px;background:#0f2c50;"></div>
<div style="position:absolute;left:571px;top:407px;width:1.2px;height:499px;background:#0f2c50;"></div>
<div style="position:absolute;left:583px;top:418px;width:177px;height:40px;background:#878787;border:1px solid #a4a9b0;border-bottom:none;border-top-left-radius:3px;border-top-right-radius:14px 12px;"></div>
<div style="position:absolute;left:763px;top:418px;width:228px;height:40px;background:#878787;border:1px solid #a4a9b0;border-bottom:none;border-top-left-radius:3px;border-top-right-radius:14px 12px;"></div>
<div style="position:absolute;left:583px;top:467px;width:133px;height:40px;background:#878787;border:1px solid #a4a9b0;border-bottom:none;border-top-left-radius:3px;border-top-right-radius:14px 12px;"></div>
<div style="position:absolute;left:719px;top:467px;width:109px;height:41px;background:#1b5584;border:1px solid #5c86ad;border-bottom:none;border-top-left-radius:3px;border-top-right-radius:14px 12px;"></div>
<div style="position:absolute;left:831px;top:467px;width:158px;height:40px;background:#878787;border:1px solid #a4a9b0;border-bottom:none;border-top-left-radius:3px;border-top-right-radius:14px 12px;"></div>
<div style="position:absolute;left:649.0px;top:429.6px;font-size:24.5px;line-height:24.5px;color:#e6e6e6;white-space:pre;transform:scaleX(0.930);transform-origin:0.0px 0;">AAC</div>
<div style="position:absolute;left:827.8px;top:429.6px;font-size:24.5px;line-height:24.5px;color:#e6e6e6;white-space:pre;letter-spacing:0.86px;">Options</div>
<div style="position:absolute;left:624.9px;top:479.1px;font-size:24.5px;line-height:24.5px;color:#e6e6e6;white-space:pre;letter-spacing:-0.63px;">Sync</div>
<div style="position:absolute;left:761.4px;top:479.1px;font-size:24.5px;line-height:24.5px;color:#ffffff;white-space:pre;transform:scaleX(0.914);transform-origin:0.6px 0;">TII</div>
<div style="position:absolute;left:874.7px;top:479.1px;font-size:24.5px;line-height:24.5px;color:#e6e6e6;white-space:pre;letter-spacing:0.64px;">Audio</div>
<div style="position:absolute;left:623.3px;top:522.8px;width:14.2px;height:14.2px;border-radius:50%;background:#ff0000"></div>
<div style="position:absolute;left:667px;top:523.2px;width:12.8px;height:13.5px;background:#0f2d4f;"></div>
<div style="position:absolute;left:594px;top:551.3px;width:371px;height:1px;background:#86a4c4;"></div>
<div style="position:absolute;left:592.8px;top:582.0px;font-size:22px;line-height:22px;color:#fff;white-space:pre;letter-spacing:0.00px;">Pattern</div>
<div style="position:absolute;left:693.8px;top:582.0px;font-size:22px;line-height:22px;color:#fff;white-space:pre;letter-spacing:0.56px;">MainId</div>
<div style="position:absolute;left:793.4px;top:582.0px;font-size:22px;line-height:22px;color:#fff;white-space:pre;letter-spacing:-0.20px;">SubId</div>
<div style="position:absolute;left:880.4px;top:582.0px;font-size:22px;line-height:22px;color:#fff;white-space:pre;letter-spacing:0.16px;">Strength</div>
<div style="position:absolute;left:594px;top:605.3px;width:371px;height:1px;background:#9cb0c8;"></div>
<div style="position:absolute;left:596.0px;top:629.4px;font-size:19.5px;line-height:19.5px;color:#fff;white-space:pre;letter-spacing:0.32px;">0x17</div>
<div style="position:absolute;left:697.5px;top:629.4px;font-size:19.5px;line-height:19.5px;color:#fff;white-space:pre;">1</div>
<div style="position:absolute;left:796.0px;top:629.4px;font-size:19.5px;line-height:19.5px;color:#fff;white-space:pre;">2</div>
<div style="position:absolute;left:883.2px;top:629.4px;font-size:19.5px;line-height:19.5px;color:#fff;white-space:pre;letter-spacing:0.12px;">0.99</div>
<div style="position:absolute;left:971px;top:407px;width:8px;height:499px;background:#f2f2f2"></div>
<div style="position:absolute;left:972px;top:409px;width:1.2px;height:497px;background:repeating-linear-gradient(#000 0 1.3px, transparent 1.3px 4.5px)"></div>
<div style="position:absolute;left:978px;top:411.2px;width:1px;height:495px;background:repeating-linear-gradient(#000 0 1.3px, transparent 1.3px 4.5px)"></div>
<div style="position:absolute;left:979px;top:407px;width:883px;height:30.5px;background:#0e2d52;"></div>
<div style="position:absolute;left:979px;top:437.5px;width:883px;height:468.5px;background:#000;"></div>
<div style="position:absolute;left:1273.9px;top:412.1px;font-size:21.5px;line-height:21.5px;color:#fff;white-space:pre;letter-spacing:-0.10px;">Channel Impulse Response (CIR)</div>
<svg style="position:absolute;left:1830px;top:407px" width="32" height="30"><polyline points="7.5,7.5 16.5,23.5 25.5,7.5 7.5,7.5" fill="none" stroke="#dfe6ee" stroke-width="1.2"/></svg>
<div style="position:absolute;left:994px;top:455px;width:20px;height:20px;border-radius:50%;background:#dedede"></div>
<div style="position:absolute;left:1018.6px;top:458.2px;font-size:17px;line-height:17px;color:#fff;white-space:pre;letter-spacing:-0.26px;">Freeze</div>
<div style="position:absolute;left:1101px;top:455px;width:20px;height:20px;border-radius:50%;background:#dedede"></div>
<div style="position:absolute;left:1125.9px;top:458.2px;font-size:17px;line-height:17px;color:#fff;white-space:pre;letter-spacing:0.55px;">Gradient</div>
<div style="position:absolute;left:1001.0px;top:520.1px;font-size:17px;line-height:17px;color:#fff;white-space:pre;letter-spacing:0.43px;">Smoothing Level</div>
<svg style="position:absolute;left:980px;top:545px" width="240" height="7"><rect x="23.7" y="0" width="1.6" height="6" fill="#b0b0b0"/><rect x="43.4" y="0" width="1.6" height="6" fill="#b0b0b0"/><rect x="63.1" y="0" width="1.6" height="6" fill="#b0b0b0"/><rect x="82.8" y="0" width="1.6" height="6" fill="#b0b0b0"/><rect x="102.5" y="0" width="1.6" height="6" fill="#b0b0b0"/><rect x="122.2" y="0" width="1.6" height="6" fill="#b0b0b0"/><rect x="142.0" y="0" width="1.6" height="6" fill="#b0b0b0"/><rect x="161.7" y="0" width="1.6" height="6" fill="#b0b0b0"/><rect x="181.4" y="0" width="1.6" height="6" fill="#b0b0b0"/><rect x="201.1" y="0" width="1.6" height="6" fill="#b0b0b0"/><rect x="220.8" y="0" width="1.6" height="6" fill="#b0b0b0"/></svg>
<div style="position:absolute;left:994.6px;top:559.9px;width:215.9999999999999px;height:3px;border-radius:2px;background:#e4e4e4"></div>
<div style="position:absolute;left:1014.4000000000001px;top:551.4px;width:20px;height:20px;border-radius:50%;background:radial-gradient(ellipse 70% 55% at 50% 22%, #f2f2f2 0%, #c4c4c4 40%, rgba(150,150,150,0) 100%), linear-gradient(#d8d8d8, #8c8c8c 55%, #4a4a4a)"></div>
<div style="position:absolute;left:1001.3px;top:600.8px;font-size:17px;line-height:17px;color:#fff;white-space:pre;letter-spacing:0.51px;">Zoom X</div>
<div style="position:absolute;left:994.6px;top:634.5px;width:215.9999999999999px;height:3px;border-radius:2px;background:#e4e4e4"></div>
<div style="position:absolute;left:994.3px;top:626px;width:20px;height:20px;border-radius:50%;background:radial-gradient(ellipse 70% 55% at 50% 22%, #f2f2f2 0%, #c4c4c4 40%, rgba(150,150,150,0) 100%), linear-gradient(#d8d8d8, #8c8c8c 55%, #4a4a4a)"></div>
<div style="position:absolute;left:1001.3px;top:675.8px;font-size:17px;line-height:17px;color:#fff;white-space:pre;letter-spacing:0.51px;">Zoom Y</div>
<div style="position:absolute;left:994.6px;top:710.0px;width:215.9999999999999px;height:3px;border-radius:2px;background:#e4e4e4"></div>
<div style="position:absolute;left:994.3px;top:701.5px;width:20px;height:20px;border-radius:50%;background:radial-gradient(ellipse 70% 55% at 50% 22%, #f2f2f2 0%, #c4c4c4 40%, rgba(150,150,150,0) 100%), linear-gradient(#d8d8d8, #8c8c8c 55%, #4a4a4a)"></div>
<div style="position:absolute;left:1001.6px;top:750.8px;font-size:17px;line-height:17px;color:#fff;white-space:pre;letter-spacing:0.16px;">x-Axis</div>
<div style="position:absolute;left:1011.5px;top:778.9px;width:17px;height:17px;border-radius:50%;background:radial-gradient(circle, #ffffff 0 55%, #d0d0d0 75%, #8a8a8a 100%)"></div>
<div style="position:absolute;left:1011.5px;top:808.8px;width:17px;height:17px;border-radius:50%;background:radial-gradient(circle, #ffffff 0 55%, #d0d0d0 75%, #8a8a8a 100%)"></div>
<div style="position:absolute;left:1015.5px;top:812.8px;width:9px;height:9px;border-radius:50%;background:#2a2a2a"></div>
<div style="position:absolute;left:1011.5px;top:838.4px;width:17px;height:17px;border-radius:50%;background:radial-gradient(circle, #ffffff 0 55%, #d0d0d0 75%, #8a8a8a 100%)"></div>
<div style="position:absolute;left:1037.0px;top:780.1px;font-size:17.5px;line-height:17.5px;color:#fff;white-space:pre;letter-spacing:-0.28px;">Samples</div>
<div style="position:absolute;left:1036.9px;top:810.0px;font-size:17.5px;line-height:17.5px;color:#fff;white-space:pre;letter-spacing:0.02px;">Distance</div>
<div style="position:absolute;left:1037.9px;top:839.7px;font-size:17.5px;line-height:17.5px;color:#fff;white-space:pre;letter-spacing:-0.34px;">Time</div>
<svg style="position:absolute;left:0;top:0" width="1862" height="906" font-family='"Liberation Sans", sans-serif'><rect x="1352" y="466" width="120.5" height="355" fill="#404040"/><g fill="#8a8a8a"><rect x="1352" y="466" width="487" height="1"/><rect x="1352" y="537" width="487" height="1"/><rect x="1352" y="608" width="487" height="1"/><rect x="1352" y="679" width="487" height="1"/><rect x="1352" y="750" width="487" height="1"/><rect x="1352" y="821" width="487" height="1"/><rect x="1375" y="466" width="1" height="355"/><rect x="1407" y="466" width="1" height="355"/><rect x="1440" y="466" width="1" height="355"/><rect x="1505" y="466" width="1" height="355"/><rect x="1538" y="466" width="1" height="355"/><rect x="1571" y="466" width="1" height="355"/><rect x="1603" y="466" width="1" height="355"/><rect x="1636" y="466" width="1" height="355"/><rect x="1668" y="466" width="1" height="355"/><rect x="1701" y="466" width="1" height="355"/><rect x="1734" y="466" width="1" height="355"/><rect x="1766" y="466" width="1" height="355"/><rect x="1799" y="466" width="1" height="355"/><rect x="1832" y="466" width="1" height="355"/><rect x="1839" y="466" width="1.5" height="356"/></g><polyline points="1354.5,784.7 1354.5,794.4 1355.5,785.0 1355.5,811.2 1356.5,778.4 1356.5,809.5 1357.5,794.0 1357.5,818.7 1358.5,776.5 1358.5,806.7 1359.5,775.6 1359.5,791.4 1360.5,789.6 1360.5,820.4 1361.5,775.1 1361.5,820.9 1362.5,777.8 1362.5,821.0 1363.5,784.1 1363.5,798.8 1364.5,785.5 1364.5,813.9 1365.5,789.5 1365.5,819.0 1366.5,799.9 1366.5,798.7 1367.5,790.6 1367.5,819.7 1368.5,769.1 1368.5,816.6 1369.5,794.8 1369.5,791.0 1370.5,789.1 1370.5,794.2 1371.5,783.5 1371.5,816.7 1372.5,774.4 1372.5,801.9 1373.5,778.2 1373.5,818.0 1374.5,798.3 1374.5,820.7 1375.5,777.4 1375.5,820.9 1376.5,792.7 1376.5,811.7 1377.5,782.2 1377.5,804.1 1378.5,774.7 1378.5,820.7 1379.5,781.3 1379.5,819.1 1380.5,798.2 1380.5,818.5 1381.5,795.2 1381.5,816.6 1382.5,794.1 1382.5,820.8 1383.5,798.7 1383.5,819.3 1384.5,791.3 1384.5,818.6 1385.5,772.8 1385.5,810.5 1386.5,776.1 1386.5,817.1 1387.5,781.4 1387.5,814.0 1388.5,784.8 1388.5,820.2 1389.5,773.8 1389.5,798.7 1390.5,775.8 1390.5,803.1 1391.5,796.5 1391.5,789.8 1392.5,794.4 1392.5,815.8 1393.5,760.6 1393.5,819.5 1394.5,788.3 1394.5,798.0 1395.5,784.8 1395.5,820.2 1396.5,782.8 1396.5,811.2 1397.5,793.0 1397.5,818.8 1398.5,795.2 1398.5,821.0 1399.5,775.2 1399.5,820.9 1400.5,772.9 1400.5,810.5 1401.5,770.6 1401.5,792.4 1402.5,795.7 1402.5,803.9 1403.5,780.5 1403.5,820.4 1404.5,764.2 1404.5,802.2 1405.5,783.5 1405.5,811.9 1406.5,782.5 1406.5,778.7 1407.5,760.6 1407.5,798.1 1408.5,787.5 1408.5,799.6 1409.5,782.0 1409.5,814.8 1410.5,776.5 1410.5,785.9 1411.5,765.0 1411.5,785.7 1412.5,769.8 1412.5,813.0 1413.5,769.0 1413.5,818.2 1414.5,770.3 1414.5,781.7 1415.5,773.2 1415.5,792.9 1416.5,765.5 1416.5,783.7 1417.5,746.1 1417.5,817.6 1418.5,764.1 1418.5,815.3 1419.5,767.6 1419.5,799.0 1420.5,778.0 1420.5,817.0 1421.5,747.4 1421.5,814.4 1422.5,741.3 1422.5,793.1 1423.5,750.4 1423.5,809.2 1424.5,759.6 1424.5,804.2 1425.5,765.5 1425.5,769.9 1426.5,743.6 1426.5,806.4 1427.5,732.8 1427.5,771.8 1428.5,763.9 1428.5,758.2 1429.5,734.9 1429.5,797.9 1430.5,733.3 1430.5,798.5 1431.5,748.0 1431.5,801.2 1432.5,758.2 1432.5,794.6 1433.5,711.0 1433.5,803.6 1434.5,748.3 1434.5,798.2 1435.5,746.1 1435.5,790.5 1436.5,715.9 1436.5,795.5 1437.5,708.3 1437.5,785.4 1438.5,736.2 1438.5,757.1 1439.5,751.4 1439.5,787.6 1440.5,724.9 1440.5,786.2 1441.5,722.7 1441.5,782.1 1442.5,712.8 1442.5,756.6 1443.5,720.8 1443.5,749.5 1444.5,713.6 1444.5,733.5 1445.5,701.6 1445.5,747.1 1446.5,700.9 1446.5,751.2 1447.5,730.2 1447.5,751.8 1448.5,726.5 1448.5,720.8 1449.5,706.6 1449.5,758.6 1450.5,714.4 1450.5,739.8 1451.5,711.5 1451.5,717.4 1452.5,721.0 1452.5,740.6 1453.5,709.3 1453.5,711.1 1454.5,709.6 1454.5,747.8 1455.5,688.7 1455.5,718.1 1456.5,677.3 1456.5,743.1 1457.5,698.6 1457.5,736.1 1458.5,694.9 1458.5,737.1 1459.5,679.3 1459.5,700.4 1460.5,683.7 1460.5,721.5 1461.5,693.5 1461.5,727.6 1462.5,669.8 1462.5,700.6 1463.5,671.6 1463.5,687.6 1464.5,664.3 1464.5,714.4 1465.5,673.8 1465.5,715.3 1466.5,669.7 1466.5,699.9 1467.5,651.0 1467.5,695.2 1468.5,643.0 1468.5,705.4 1469.5,663.1 1469.5,693.9 1470.5,612.7 1470.5,685.3 1471.5,605.3 1471.5,685.0 1472.5,598.0 1472.5,686.4 1473.5,598.0 1473.5,708.4 1474.5,615.1 1474.5,735.3 1475.5,632.6 1475.5,742.0 1476.5,714.1 1476.5,726.5 1477.5,670.6 1477.5,775.0 1478.5,719.1 1478.5,771.8 1479.5,716.2 1479.5,747.5 1480.5,694.2 1480.5,776.1 1481.5,697.8 1481.5,769.5 1482.5,706.4 1482.5,764.8 1483.5,698.4 1483.5,758.2 1484.5,721.3 1484.5,738.5 1485.5,720.7 1485.5,778.5 1486.5,728.4 1486.5,734.2 1487.5,708.3 1487.5,732.6 1488.5,705.3 1488.5,737.4 1489.5,703.3 1489.5,753.9 1490.5,708.8 1490.5,744.6 1491.5,716.5 1491.5,782.6 1492.5,716.6 1492.5,783.6 1493.5,709.5 1493.5,738.3 1494.5,746.7 1494.5,771.8 1495.5,735.9 1495.5,760.4 1496.5,706.6 1496.5,784.6 1497.5,727.0 1497.5,769.2 1498.5,711.7 1498.5,783.5 1499.5,742.5 1499.5,740.1 1500.5,700.2 1500.5,775.9 1501.5,739.8 1501.5,775.9 1502.5,728.8 1502.5,769.0 1503.5,712.5 1503.5,750.6 1504.5,717.5 1504.5,760.0 1505.5,726.4 1505.5,785.7 1506.5,720.3 1506.5,755.9 1507.5,740.6 1507.5,769.1 1508.5,728.5 1508.5,776.3 1509.5,755.1 1509.5,785.1 1510.5,752.1 1510.5,759.7 1511.5,748.1 1511.5,750.0 1512.5,751.7 1512.5,761.5 1513.5,746.9 1513.5,765.2 1514.5,722.5 1514.5,779.8 1515.5,722.2 1515.5,771.5 1516.5,742.6 1516.5,748.2 1517.5,745.0 1517.5,770.9 1518.5,741.7 1518.5,783.8 1519.5,760.7 1519.5,769.1 1520.5,750.7 1520.5,790.0 1521.5,745.3 1521.5,788.0 1522.5,732.6 1522.5,785.3 1523.5,730.0 1523.5,755.6 1524.5,744.7 1524.5,750.7 1525.5,746.0 1525.5,775.2 1526.5,747.2 1526.5,768.2 1527.5,732.0 1527.5,790.8 1528.5,744.6 1528.5,782.9 1529.5,738.5 1529.5,785.9 1530.5,747.5 1530.5,787.7 1531.5,740.3 1531.5,781.0 1532.5,740.7 1532.5,789.9 1533.5,735.2 1533.5,792.9 1534.5,738.4 1534.5,788.1 1535.5,763.5 1535.5,793.4 1536.5,767.5 1536.5,793.5 1537.5,764.5 1537.5,786.1 1538.5,767.6 1538.5,784.6 1539.5,766.5 1539.5,786.9 1540.5,768.6 1540.5,781.7 1541.5,740.9 1541.5,787.9 1542.5,735.2 1542.5,794.7 1543.5,750.6 1543.5,788.5 1544.5,745.9 1544.5,789.9 1545.5,762.8 1545.5,757.7 1546.5,769.7 1546.5,794.4 1547.5,743.9 1547.5,774.1 1548.5,758.7 1548.5,794.4 1549.5,761.2 1549.5,784.9 1550.5,759.9 1550.5,796.0 1551.5,749.0 1551.5,766.6 1552.5,764.7 1552.5,795.4 1553.5,754.7 1553.5,797.5 1554.5,754.0 1554.5,782.5 1555.5,759.4 1555.5,794.0 1556.5,757.6 1556.5,795.0 1557.5,766.5 1557.5,798.5 1558.5,749.5 1558.5,786.2 1559.5,768.1 1559.5,793.8 1560.5,753.3 1560.5,795.7 1561.5,765.0 1561.5,797.1 1562.5,762.1 1562.5,770.5 1563.5,758.8 1563.5,800.9 1564.5,769.0 1564.5,791.3 1565.5,761.2 1565.5,799.5 1566.5,765.2 1566.5,787.8 1567.5,751.7 1567.5,784.9 1568.5,768.9 1568.5,803.0 1569.5,758.8 1569.5,799.9 1570.5,753.3 1570.5,793.7 1571.5,778.0 1571.5,774.5 1572.5,762.1 1572.5,802.7 1573.5,759.0 1573.5,773.6 1574.5,778.3 1574.5,802.3 1575.5,761.0 1575.5,801.9 1576.5,762.0 1576.5,796.6 1577.5,775.8 1577.5,782.2 1578.5,768.1 1578.5,787.5 1579.5,779.7 1579.5,808.7 1580.5,767.3 1580.5,798.2 1581.5,783.7 1581.5,785.9 1582.5,756.0 1582.5,787.4 1583.5,756.7 1583.5,790.9 1584.5,782.3 1584.5,796.9 1585.5,758.5 1585.5,796.6 1586.5,761.3 1586.5,790.4 1587.5,769.9 1587.5,807.5 1588.5,764.5 1588.5,796.6 1589.5,769.6 1589.5,794.2 1590.5,777.2 1590.5,808.0 1591.5,781.9 1591.5,786.2 1592.5,781.4 1592.5,783.9 1593.5,787.5 1593.5,804.9 1594.5,778.5 1594.5,808.8 1595.5,769.0 1595.5,794.7 1596.5,789.7 1596.5,814.4 1597.5,763.6 1597.5,812.8 1598.5,783.0 1598.5,815.3 1599.5,777.7 1599.5,815.0 1600.5,761.4 1600.5,804.3 1601.5,783.0 1601.5,815.5 1602.5,765.4 1602.5,798.0 1603.5,777.0 1603.5,816.1 1604.5,767.7 1604.5,796.2 1605.5,768.8 1605.5,792.7 1606.5,774.1 1606.5,788.0 1607.5,789.8 1607.5,807.8 1608.5,791.7 1608.5,816.9 1609.5,763.9 1609.5,794.8 1610.5,772.4 1610.5,809.8 1611.5,769.6 1611.5,803.8 1612.5,761.1 1612.5,815.0 1613.5,787.1 1613.5,806.8 1614.5,767.5 1614.5,816.7 1615.5,770.3 1615.5,811.2 1616.5,782.3 1616.5,818.4 1617.5,779.1 1617.5,799.0 1618.5,766.0 1618.5,794.3 1619.5,789.7 1619.5,818.9 1620.5,786.1 1620.5,813.4 1621.5,778.2 1621.5,809.4 1622.5,791.6 1622.5,798.8 1623.5,777.3 1623.5,820.8 1624.5,791.0 1624.5,811.4 1625.5,781.2 1625.5,796.6 1626.5,775.5 1626.5,820.9 1627.5,775.7 1627.5,803.8 1628.5,777.4 1628.5,820.7 1629.5,778.7 1629.5,788.1 1630.5,792.5 1630.5,821.0 1631.5,778.9 1631.5,819.5 1632.5,784.5 1632.5,821.0 1633.5,798.7 1633.5,819.9 1634.5,786.6 1634.5,817.0 1635.5,784.7 1635.5,817.9 1636.5,781.0 1636.5,819.3 1637.5,776.8 1637.5,818.1 1638.5,798.0 1638.5,804.8 1639.5,780.5 1639.5,820.8 1640.5,776.8 1640.5,807.3 1641.5,791.3 1641.5,816.7 1642.5,795.4 1642.5,820.8 1643.5,779.6 1643.5,820.7 1644.5,772.7 1644.5,816.2 1645.5,787.0 1645.5,803.7 1646.5,795.8 1646.5,818.3 1647.5,777.9 1647.5,807.1 1648.5,801.1 1648.5,808.9 1649.5,783.8 1649.5,818.2 1650.5,791.7 1650.5,817.5 1651.5,788.1 1651.5,801.4 1652.5,790.8 1652.5,804.4 1653.5,799.0 1653.5,818.0 1654.5,788.2 1654.5,806.9 1655.5,801.6 1655.5,806.9 1656.5,797.2 1656.5,795.0 1657.5,791.6 1657.5,820.9 1658.5,782.8 1658.5,807.8 1659.5,784.7 1659.5,817.9 1660.5,787.8 1660.5,793.5 1661.5,781.2 1661.5,813.4 1662.5,790.3 1662.5,819.4 1663.5,799.8 1663.5,802.5 1664.5,791.5 1664.5,802.2 1665.5,784.4 1665.5,819.7 1666.5,791.0 1666.5,820.3 1667.5,786.2 1667.5,820.3 1668.5,802.3 1668.5,809.6 1669.5,785.2 1669.5,806.5 1670.5,786.9 1670.5,803.5 1671.5,780.8 1671.5,815.7 1672.5,782.5 1672.5,812.8 1673.5,783.2 1673.5,819.5 1674.5,791.5 1674.5,810.4 1675.5,781.4 1675.5,820.6 1676.5,802.0 1676.5,815.7 1677.5,788.2 1677.5,808.8 1678.5,796.6 1678.5,815.3 1679.5,803.1 1679.5,801.4 1680.5,788.5 1680.5,813.1 1681.5,800.7 1681.5,814.4 1682.5,789.1 1682.5,818.8 1683.5,782.5 1683.5,799.4 1684.5,796.4 1684.5,806.5 1685.5,786.8 1685.5,820.9 1686.5,783.8 1686.5,815.0 1687.5,779.3 1687.5,814.4 1688.5,785.9 1688.5,817.5 1689.5,774.7 1689.5,796.1 1690.5,795.2 1690.5,817.0 1691.5,798.7 1691.5,807.0 1692.5,793.0 1692.5,820.8 1693.5,798.6 1693.5,814.2 1694.5,796.8 1694.5,819.1 1695.5,777.1 1695.5,804.2 1696.5,789.7 1696.5,812.9 1697.5,772.8 1697.5,819.0 1698.5,792.1 1698.5,796.2 1699.5,791.6 1699.5,819.2 1700.5,802.3 1700.5,820.3 1701.5,800.2 1701.5,816.0 1702.5,786.0 1702.5,795.3 1703.5,786.5 1703.5,820.3 1704.5,796.4 1704.5,808.2 1705.5,788.4 1705.5,801.9 1706.5,797.0 1706.5,809.3 1707.5,802.7 1707.5,820.9 1708.5,786.8 1708.5,808.7 1709.5,786.3 1709.5,819.9 1710.5,795.9 1710.5,818.0 1711.5,795.8 1711.5,812.8 1712.5,786.8 1712.5,799.0 1713.5,795.9 1713.5,811.2 1714.5,784.7 1714.5,816.7 1715.5,792.7 1715.5,821.0 1716.5,794.3 1716.5,819.8 1717.5,799.1 1717.5,819.3 1718.5,798.0 1718.5,819.4 1719.5,793.1 1719.5,800.4 1720.5,796.2 1720.5,807.1 1721.5,789.6 1721.5,815.3 1722.5,785.8 1722.5,811.0 1723.5,789.1 1723.5,805.7 1724.5,792.3 1724.5,802.9 1725.5,796.1 1725.5,797.5 1726.5,785.7 1726.5,820.5 1727.5,794.3 1727.5,816.7 1728.5,798.3 1728.5,805.3 1729.5,786.7 1729.5,820.1 1730.5,793.7 1730.5,821.0 1731.5,794.0 1731.5,813.3 1732.5,800.8 1732.5,820.6 1733.5,783.6 1733.5,816.8 1734.5,790.6 1734.5,805.0 1735.5,784.1 1735.5,813.4 1736.5,792.8 1736.5,819.9 1737.5,785.1 1737.5,821.0 1738.5,788.0 1738.5,814.6 1739.5,787.0 1739.5,820.9 1740.5,799.4 1740.5,819.7 1741.5,785.2 1741.5,803.4 1742.5,791.2 1742.5,818.1 1743.5,786.1 1743.5,821.0 1744.5,791.5 1744.5,795.4 1745.5,784.9 1745.5,807.2 1746.5,783.5 1746.5,800.5 1747.5,784.9 1747.5,819.2 1748.5,785.7 1748.5,794.8 1749.5,797.8 1749.5,820.0 1750.5,786.7 1750.5,819.8 1751.5,790.8 1751.5,818.1 1752.5,788.2 1752.5,812.0 1753.5,783.4 1753.5,810.7 1754.5,783.6 1754.5,809.1 1755.5,800.3 1755.5,800.6 1756.5,790.7 1756.5,802.8 1757.5,789.0 1757.5,820.1 1758.5,788.3 1758.5,813.9 1759.5,785.0 1759.5,820.1 1760.5,790.8 1760.5,816.5 1761.5,803.7 1761.5,801.8 1762.5,785.6 1762.5,820.9 1763.5,795.9 1763.5,819.5 1764.5,783.1 1764.5,819.6 1765.5,789.1 1765.5,808.2 1766.5,786.7 1766.5,820.6 1767.5,802.1 1767.5,806.2 1768.5,796.6 1768.5,821.0 1769.5,787.7 1769.5,820.9 1770.5,800.7 1770.5,805.9 1771.5,784.6 1771.5,819.9 1772.5,783.1 1772.5,812.5 1773.5,783.0 1773.5,816.9 1774.5,792.3 1774.5,808.5 1775.5,786.4 1775.5,810.0 1776.5,784.5 1776.5,819.4 1777.5,796.3 1777.5,817.7 1778.5,800.2 1778.5,819.2 1779.5,788.0 1779.5,821.0 1780.5,782.8 1780.5,813.3 1781.5,798.7 1781.5,819.1 1782.5,795.2 1782.5,820.1 1783.5,795.6 1783.5,796.7 1784.5,800.2 1784.5,811.2 1785.5,783.5 1785.5,817.6 1786.5,783.1 1786.5,818.7 1787.5,791.1 1787.5,820.5 1788.5,789.0 1788.5,820.5 1789.5,795.0 1789.5,820.9 1790.5,787.7 1790.5,820.6 1791.5,793.0 1791.5,813.7 1792.5,788.7 1792.5,818.1 1793.5,783.0 1793.5,821.0 1794.5,790.9 1794.5,815.9 1795.5,787.3 1795.5,821.0 1796.5,787.8 1796.5,813.3 1797.5,786.1 1797.5,820.3 1798.5,790.3 1798.5,796.6 1799.5,788.0 1799.5,797.3 1800.5,797.5 1800.5,811.5 1801.5,789.0 1801.5,819.4 1802.5,799.0 1802.5,817.7 1803.5,796.0 1803.5,814.9 1804.5,786.9 1804.5,795.2 1805.5,784.1 1805.5,819.9 1806.5,795.2 1806.5,821.0 1807.5,791.9 1807.5,819.8 1808.5,790.7 1808.5,813.8 1809.5,793.8 1809.5,802.9 1810.5,802.7 1810.5,818.4 1811.5,800.4 1811.5,808.0 1812.5,795.5 1812.5,795.9 1813.5,798.8 1813.5,811.4 1814.5,790.6 1814.5,818.0 1815.5,786.3 1815.5,814.1 1816.5,785.4 1816.5,818.7 1817.5,784.3 1817.5,820.7 1818.5,777.8 1818.5,808.4 1819.5,783.3 1819.5,805.6 1820.5,790.3 1820.5,801.1 1821.5,793.7 1821.5,814.8 1822.5,797.5 1822.5,807.7 1823.5,784.5 1823.5,818.6 1824.5,785.8 1824.5,801.5 1825.5,797.7 1825.5,816.7 1826.5,794.1 1826.5,801.7 1827.5,796.5 1827.5,817.6 1828.5,792.6 1828.5,820.3 1829.5,778.6 1829.5,795.0 1830.5,800.8 1830.5,807.8 1831.5,785.4 1831.5,817.0 1832.5,799.3 1832.5,821.0 1833.5,792.6 1833.5,821.0 1834.5,781.4 1834.5,790.3 1835.5,777.7 1835.5,821.0 1836.5,787.0 1836.5,817.4 1837.5,780.8 1837.5,799.3 1838.5,779.9 1838.5,809.8" fill="none" stroke="#ffffff" stroke-width="1" stroke-linejoin="miter" shape-rendering="crispEdges"/><rect x="1352" y="466" width="2" height="355" fill="#b02424"/><line x1="1472.5" y1="466" x2="1472.5" y2="515" stroke="#e8e860" stroke-width="1" stroke-dasharray="1.5 1.5"/><line x1="1472.5" y1="521" x2="1472.5" y2="605" stroke="#f0f070" stroke-width="1.6"/><line x1="1472.5" y1="605" x2="1472.5" y2="824" stroke="#d8d850" stroke-width="1" stroke-dasharray="1.5 1.5"/><circle cx="1473" cy="520.6" r="6.2" fill="#ffee00"/><g fill="#fff"><text x="1341.4" y="473.2" text-anchor="end" font-size="20.5">-20.0</text><text x="1341.4" y="544.2" text-anchor="end" font-size="20.5">-30.0</text><text x="1341.4" y="615.2" text-anchor="end" font-size="20.5">-40.0</text><text x="1341.4" y="686.2" text-anchor="end" font-size="20.5">-50.0</text><text x="1341.4" y="757.2" text-anchor="end" font-size="20.5">-60.0</text><text x="1341.4" y="828.2" text-anchor="end" font-size="20.5">-70.0</text><text x="1374.8" y="841.7" text-anchor="middle" font-size="15.2">-60</text><text x="1407.4" y="862" text-anchor="middle" font-size="15.2">-40</text><text x="1440.1" y="841.7" text-anchor="middle" font-size="15.2">-20</text><text x="1472.7" y="862" text-anchor="middle" font-size="15.2">0</text><text x="1505.3" y="841.7" text-anchor="middle" font-size="15.2">20</text><text x="1538.0" y="862" text-anchor="middle" font-size="15.2">40</text><text x="1570.6" y="841.7" text-anchor="middle" font-size="15.2">60</text><text x="1603.2" y="862" text-anchor="middle" font-size="15.2">80</text><text x="1635.8" y="841.7" text-anchor="middle" font-size="15.2">100</text><text x="1668.5" y="862" text-anchor="middle" font-size="15.2">120</text><text x="1701.1" y="841.7" text-anchor="middle" font-size="15.2">140</text><text x="1733.7" y="862" text-anchor="middle" font-size="15.2">160</text><text x="1766.4" y="841.7" text-anchor="middle" font-size="15.2">180</text><text x="1799.0" y="862" text-anchor="middle" font-size="15.2">200</text><text x="1831.6" y="841.7" text-anchor="middle" font-size="15.2">220</text></g><text x="1595.7" y="889.8" text-anchor="middle" font-size="20.3" fill="#fff">Distance Difference (km)</text><text x="1270.6" y="644.7" text-anchor="middle" font-size="20" fill="#fff" transform="rotate(-90 1270.6 644.7)">Magnitude (dB)</text></svg>
</body></html>
